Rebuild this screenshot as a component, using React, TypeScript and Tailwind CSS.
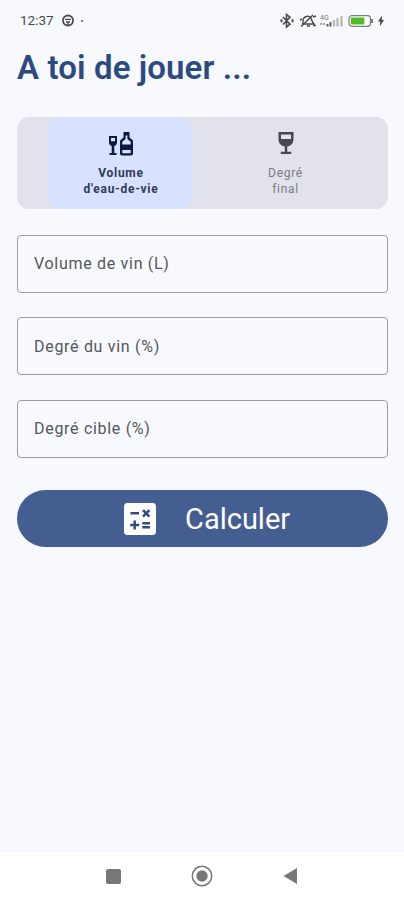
import React from "react";

function StatusBar() {
  return (
    <div className="flex h-[41px] items-center px-5 text-[#4a4b50]">
      <span className="w-[35px] whitespace-nowrap text-[13.5px] leading-none">12:37</span>
      <svg className="ml-[6px]" width="14" height="14" viewBox="0 0 14 14" fill="none">
        <circle cx="7" cy="6.5" r="5" stroke="currentColor" strokeWidth="1.8" />
        <path d="M4 5.3h6M5 8h4M7 8v3.5" stroke="currentColor" strokeWidth="1.3" />
      </svg>
      <span className="ml-[6px] h-[2px] w-[2px] rounded-full bg-[#55565b]" />

      <svg className="ml-auto" width="14" height="16" viewBox="0 0 14 16" fill="none" stroke="currentColor" strokeWidth="1.6">
        <path d="M3 4l7 7.2L6.500 14V1.500L10 4.300 3 11.500" />
        <path d="M1.500 6.200v3M12.500 6.200v3" strokeWidth="2" />
      </svg>
      <svg className="ml-[5px]" width="18" height="16" viewBox="0 0 18 16" fill="none" stroke="currentColor" strokeWidth="1.4">
        <path d="M4 11V7.500a4.500 4.500 0 0 1 8-2.500l1 3 2 3H3M8 13h3" />
        <path d="M2 13.500L14 2M1 7l2-1M14 4l3-1M14 12.500h3" />
      </svg>
      <svg className="ml-[2px]" width="26" height="16" viewBox="0 0 26 16">
        <text x="1" y="6.5" fontFamily="Roboto, sans-serif" fontSize="7" fill="#77787d">
          4G
        </text>
        <path d="M1 11h2M4 11h2" stroke="#85868a" strokeWidth="1.5" />
        <path d="M8.5 11v2.5M11.5 9v4.5" stroke="#606166" strokeWidth="2" />
        <path d="M15 7v6.5M18.5 5v8.5M22.5 3v10.5" stroke="#b4b5ba" strokeWidth="2.2" />
      </svg>
      <svg className="ml-[3px]" width="26" height="14" viewBox="0 0 26 14">
        <rect x="1" y="1.7" width="21.5" height="10.6" rx="3" fill="#fff" stroke="#7b7c80" strokeWidth="1.2" />
        <rect x="2.8" y="3.5" width="13.5" height="7" rx="1" fill="#50bd24" />
        <path d="M24 5v4" stroke="#7b7c80" strokeWidth="2" />
      </svg>
      <svg className="ml-[3px] -mr-[1px]" width="8" height="12" viewBox="0 0 8 12">
        <path d="M5 .5L1 6.600h2.200L2.700 11.500 7 5H4.800z" fill="currentColor" />
      </svg>
    </div>
  );
}

function LiquorIcon() {
  return (
    <svg width="24" height="24" viewBox="0 0 24 24" fill="#0b1b42">
      <path
        fillRule="evenodd"
        d="M0 4h8v6.5c0 1.8-1.1 3-2.7 3.4V21H7.5v2H.5v-2h2.2v-7.1C1.1 13.5 0 12.3 0 10.5zM2 6v3.3h4V6z"
      />
      <path
        fillRule="evenodd"
        d="M14.5 0h6v5.6l2.3 1.8c.7.4 1.2 1.1 1.2 2V21.500c0 1.100-.9 2-2 2H13c-1.100 0-2-.9-2-2V9.400c0-.9.4-1.600 1.200-2l2.300-1.800zM16.600 3.500v3.600L13.300 9.800v2.700h8.400V9.800l-3.300-2.700V3.500zM13.300 18v3.200h8.400V18z"
      />
    </svg>
  );
}

function WineIcon() {
  return (
    <svg width="16" height="24" viewBox="0 0 16 24" fill="#46474f">
      <path
        fillRule="evenodd"
        d="M.5 0h15v7.500c0 3.700-2.700 6.500-6.300 7v5.200h4v2.300H2.800v-2.300h4v-5.200C3.200 14 .5 11.200.5 7.500zM3 2.500V7h10V2.500z"
      />
    </svg>
  );
}

function CalculateIcon() {
  return (
    <svg width="32" height="32" viewBox="0 0 32 32">
      <rect width="32" height="32" rx="3.5" fill="#fff" />
      <path
        d="M6.500 10.300H15M6.200 22h9M10.700 17.500v9M18.300 20.200H26M18.300 24.300H26M19 7.200l6.400 6.400M25.400 7.200L19 13.600"
        stroke="#304b83"
        strokeWidth="2.5"
      />
    </svg>
  );
}

const fields = ["Volume de vin (L)", "Degré du vin (%)", "Degré cible (%)"];

export default function App() {
  return (
    <div className="flex h-[900px] w-[404px] flex-col overflow-hidden bg-[#f8f9fe] font-['Roboto',sans-serif]">
      <StatusBar />

      <main className="flex flex-1 flex-col pl-[17px] pr-4">
        <h1 className="mt-[7px] h-10 whitespace-nowrap text-[33px] leading-10 font-semibold tracking-[0.1px] text-[#2b4b80]">
          A toi de jouer ...
        </h1>

        <div className="mt-[29px] flex h-[92px] rounded-[12px] bg-[#e1e2ea] pl-[31px]">
          <button className="flex w-36 flex-col items-center rounded-[12px] bg-[#d8e2ff] pt-[15px] pl-[2px] text-[#303b55]">
            <LiquorIcon />
            <span className="mt-[9px] text-center text-[12px] leading-4 font-bold tracking-[0.7px]">
              Volume
              <br />
              d'eau-de-vie
            </span>
          </button>
          <button className="ml-[21px] flex w-36 flex-col items-center pt-[15px] pl-px text-[#7b7c84]">
            <WineIcon />
            <span className="mt-[9px] text-center text-[12px] leading-4 tracking-[0.7px]">
              Degré
              <br />
              final
            </span>
          </button>
        </div>

        <div className="mt-[25.5px] flex flex-col gap-[24.5px]">
          {fields.map((label) => (
            <label
              key={label}
              className="flex h-[58px] items-center rounded-[4px] border border-[#9c9da2] pt-px pl-4 text-[16px] tracking-[0.7px] text-[#55565c]"
            >
              {label}
            </label>
          ))}
        </div>

        <button className="mt-[32.5px] flex h-[57px] items-center rounded-full bg-[#445e91] pl-[107px] text-white">
          <CalculateIcon />
          <span className="ml-[29px] pt-px text-[29px] leading-none">Calculer</span>
        </button>
      </main>

      <nav className="flex h-12 items-center bg-white pl-[106px]">
        <span className="h-[15px] w-[15px] rounded-[2px] bg-[#777]" />
        <svg className="ml-[70px]" width="22" height="22" viewBox="0 0 22 22">
          <circle cx="11" cy="11" r="9.7" fill="none" stroke="#777" strokeWidth="1.5" />
          <circle cx="11" cy="11" r="5.7" fill="#777" />
        </svg>
        <svg className="ml-[70px]" width="15" height="18" viewBox="0 0 15 18">
          <path d="M14 1v16L.5 9z" fill="#777" />
        </svg>
      </nav>
    </div>
  );
}
